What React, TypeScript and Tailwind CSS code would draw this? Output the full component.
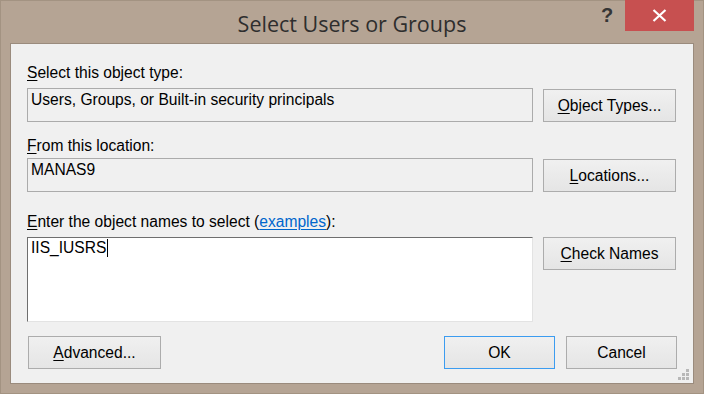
import React from "react";

const U = ({ c }: { c: string }) => <span className="underline underline-offset-2">{c}</span>;

function Btn({ children, w, primary }: { children: React.ReactNode; w: string; primary?: boolean }) {
  return (
    <div
      className={`${w} h-[33px] flex items-center justify-center border bg-gradient-to-b from-[#f0f0f0] to-[#e5e5e5] text-[#000] ${
        primary ? "border-[#3c9cf0]" : "border-[#acacac]"
      }`}
    >
      <span className="leading-[18px]">{children}</span>
    </div>
  );
}

export default function App() {
  return (
    <div
      className="w-[704px] h-[394px] bg-[#b5a494] border border-[#a39382] flex flex-col"
      style={{ fontFamily: '"Liberation Sans", Arial, sans-serif' }}
    >
      {/* Title bar */}
      <div className="relative h-[42px] shrink-0">
        <div
          className="text-center text-[21.5px] leading-[28px] pt-[9px] text-[#2e2e2e]"
          style={{ fontFamily: '"Open Sans", "Noto Sans", sans-serif' }}
        >
          Select Users or Groups
        </div>
        <div className="absolute top-[-1px] right-[9px] flex items-start">
          <div className="w-[28px] h-[31px] flex items-start justify-center pt-[5px] mr-[4px] text-[20px] leading-[20px] font-bold text-[#353535]">
            ?
          </div>
          <div className="w-[69px] h-[31px] bg-[#c75050] flex items-center justify-center">
            <svg width="15" height="13" viewBox="0 0 15 13">
              <path d="M1.5 1 L13.5 12 M13.5 1 L1.5 12" stroke="#ffffff" strokeWidth="2.2" />
            </svg>
          </div>
        </div>
      </div>

      {/* Client area */}
      <div className="relative mx-[9px] mb-[9px] flex-1 border border-[#9a8b7d] bg-[#f0f0f0] text-[15.6px] text-[#000] flex flex-col pl-[16px] pr-[16px]">
        {/* Section 1 */}
        <div className="mt-[20px] h-[18px] leading-[18px]">
          <U c="S" />elect this object type:
        </div>
        <div className="mt-[6px] flex gap-[10px]">
          <div className="w-[506px] h-[34px] border border-[#ababab] bg-[#f0f0f0] pl-[3px] pt-[2px] leading-[18px]">
            Users, Groups, or Built-in security principals
          </div>
          <div className="mt-px">
            <Btn w="w-[133px]">
              <U c="O" />bject Types...
            </Btn>
          </div>
        </div>

        {/* Section 2 */}
        <div className="mt-[15px] h-[18px] leading-[18px]">
          <U c="F" />rom this location:
        </div>
        <div className="mt-[3px] flex gap-[10px]">
          <div className="w-[506px] h-[34px] border border-[#ababab] bg-[#f0f0f0] pl-[3px] pt-[2px] leading-[18px]">
            MANAS9
          </div>
          <div className="mt-px">
            <Btn w="w-[133px]">
              <U c="L" />ocations...
            </Btn>
          </div>
        </div>

        {/* Section 3 */}
        <div className="mt-[21px] h-[18px] leading-[18px]">
          <U c="E" />nter the object names to select (
          <span className="text-[#0066cc] underline underline-offset-2">examples</span>):
        </div>
        <div className="mt-[6px] flex gap-[10px]">
          <div className="w-[506px] h-[85px] border border-t-[#6e6e6e] border-l-[#6e6e6e] border-r-[#e3e3e3] border-b-[#e3e3e3] bg-white pl-[3px] pt-[1px] leading-[18px] flex items-start">
            <span>IIS_IUSRS</span>
            <span className="inline-block w-px h-[18px] bg-black ml-px" />
          </div>
          <Btn w="w-[133px]">
            <U c="C" />heck Names
          </Btn>
        </div>

        {/* Bottom buttons */}
        <div className="mt-[14px] flex items-start">
          <div className="ml-px">
            <Btn w="w-[133px]">
              <U c="A" />dvanced...
            </Btn>
          </div>
          <div className="flex-1" />
          <Btn w="w-[111px]" primary>
            OK
          </Btn>
          <div className="w-[11px]" />
          <Btn w="w-[111px]">Cancel</Btn>
        </div>

        {/* Resize grip */}
        <svg className="absolute right-[3px] bottom-[2px]" width="12" height="12" viewBox="0 0 12 12">
          <rect x="8" y="0" width="3" height="3" fill="#b8b8b8" />
          <rect x="4" y="4" width="3" height="3" fill="#b8b8b8" />
          <rect x="8" y="4" width="3" height="3" fill="#b8b8b8" />
          <rect x="0" y="8" width="3" height="3" fill="#b8b8b8" />
          <rect x="4" y="8" width="3" height="3" fill="#b8b8b8" />
          <rect x="8" y="8" width="3" height="3" fill="#b8b8b8" />
        </svg>
      </div>
    </div>
  );
}
